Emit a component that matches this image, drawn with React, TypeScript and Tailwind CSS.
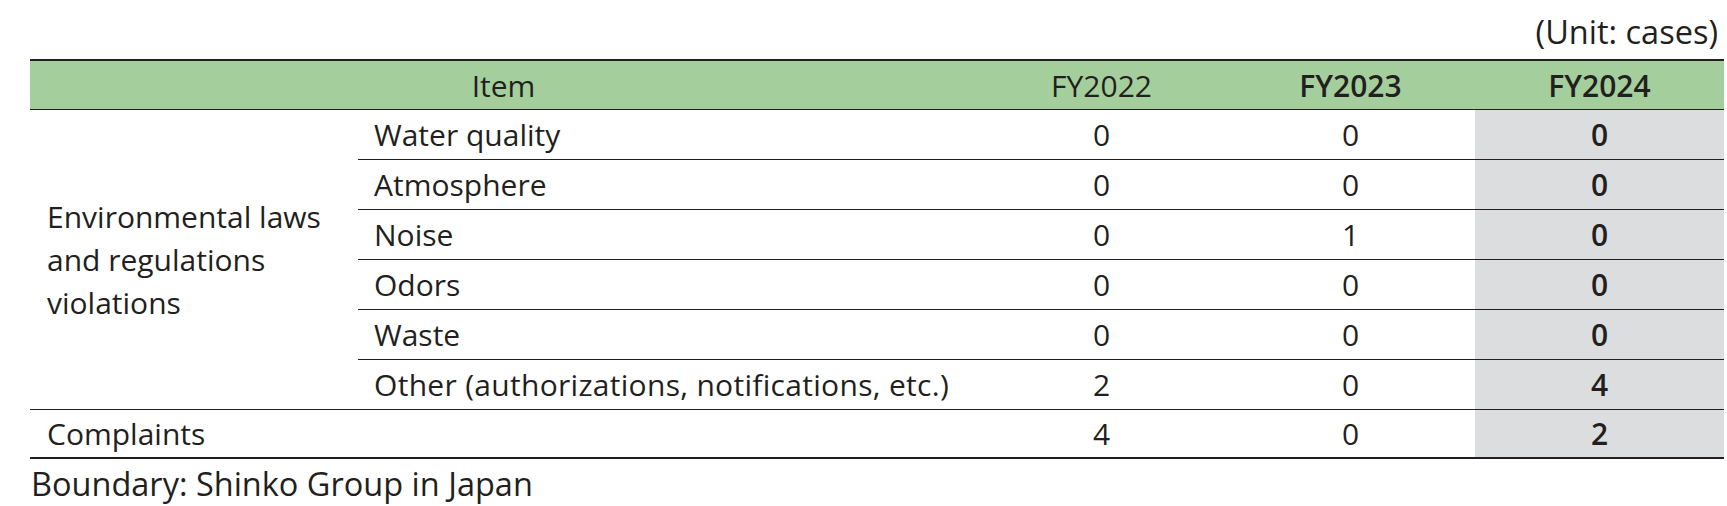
import React from "react";

const subRows: { label: string; a: string; b: string; c: string }[] = [
  { label: "Water quality", a: "0", b: "0", c: "0" },
  { label: "Atmosphere", a: "0", b: "0", c: "0" },
  { label: "Noise", a: "0", b: "1", c: "0" },
  { label: "Odors", a: "0", b: "0", c: "0" },
  { label: "Waste", a: "0", b: "0", c: "0" },
  { label: "Other (authorizations, notifications, etc.)", a: "2", b: "0", c: "4" },
];

export default function App() {
  return (
    <div
      className="w-[1727px] h-[506px] bg-white text-[#231f20] text-[30px] font-normal overflow-hidden"
      style={{ fontFamily: "'Open Sans', Lato, sans-serif" }}
    >
      <div className="pl-[30px] w-[1724px]">
        <div className="h-[59px] pt-[14px] leading-[36px] text-right pr-[6px] text-[32.5px]">(Unit: cases)</div>
        <div className="grid grid-cols-[328px_619px_249px_249px_249px] border-t-2 border-b-2 border-[#231f20]">
          {/* header */}
          <div className="col-span-2 h-[49px] bg-[#a4cf9c] border-b border-[#231f20] flex items-center justify-center">
            Item
          </div>
          <div className="h-[49px] bg-[#a4cf9c] border-b border-[#231f20] flex items-center justify-center">
            FY2022
          </div>
          <div className="h-[49px] bg-[#a4cf9c] border-b border-[#231f20] flex items-center justify-center font-[550]">
            FY2023
          </div>
          <div className="h-[49px] bg-[#a4cf9c] border-b border-[#231f20] flex items-center justify-center font-[550]">
            FY2024
          </div>

          {/* group label */}
          <div className="row-span-6 border-b border-[#231f20] flex items-center pl-[17px] leading-[43px]">
            <div>
              Environmental laws
              <br />
              and regulations
              <br />
              violations
            </div>
          </div>
          {subRows.map((r, i) => (
            <React.Fragment key={r.label}>
              <div
                className={
                  i === 5
                    ? "h-[50px] border-b border-[#231f20] flex items-center pl-[16px] tracking-[0.3px]"
                    : "h-[50px] border-b border-[#231f20] flex items-center pl-[16px]"
                }
              >
                {r.label}
              </div>
              <div className="h-[50px] border-b border-[#231f20] flex items-center justify-center">{r.a}</div>
              <div className="h-[50px] border-b border-[#231f20] flex items-center justify-center">{r.b}</div>
              <div className="h-[50px] border-b border-[#231f20] bg-[#dcdddf] flex items-center justify-center font-[550]">
                {r.c}
              </div>
            </React.Fragment>
          ))}

          {/* complaints */}
          <div className="col-span-2 h-[47px] flex items-center pl-[17px]">Complaints</div>
          <div className="h-[47px] flex items-center justify-center">4</div>
          <div className="h-[47px] flex items-center justify-center">0</div>
          <div className="h-[47px] bg-[#dcdddf] flex items-center justify-center font-[550]">2</div>
        </div>
        <div className="mt-[7px] leading-[36px] pl-[1px] text-[32.5px]">Boundary: Shinko Group in Japan</div>
      </div>
    </div>
  );
}
